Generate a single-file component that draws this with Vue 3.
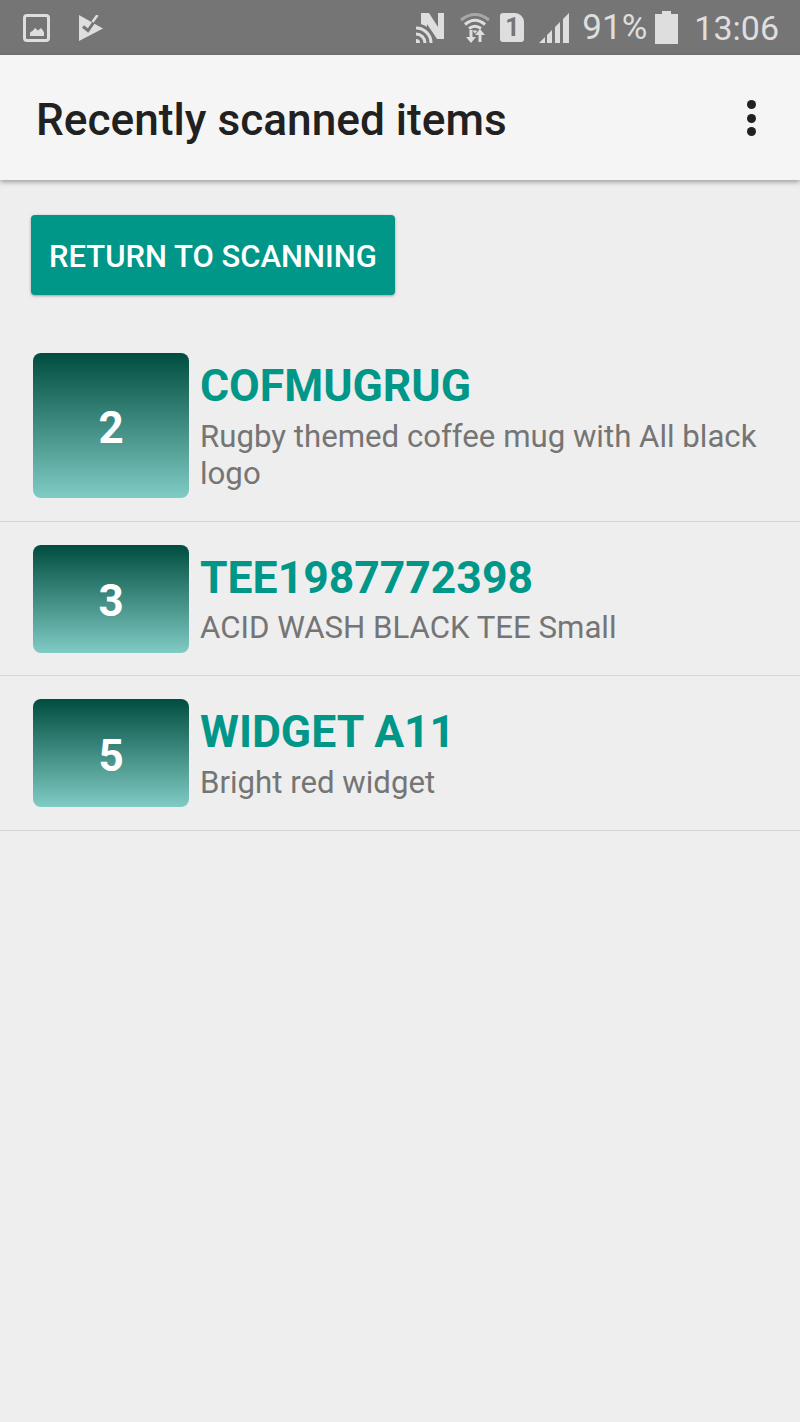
<script setup>
const items = [
  { qty: 2, sku: "COFMUGRUG", desc: "Rugby themed coffee mug with All black logo" },
  { qty: 3, sku: "TEE1987772398", desc: "ACID WASH BLACK TEE Small" },
  { qty: 5, sku: "WIDGET A11", desc: "Bright red widget" },
];
</script>

<template>
  <div class="screen">
    <div class="status-bar">
      <div class="status-left">
        <svg width="27" height="28" viewBox="0 0 27 28">
          <rect x="1.5" y="1.5" width="24" height="25" rx="2.5" fill="none" stroke="#dedede" stroke-width="3" />
          <path d="M7 22v-3.500l3-2 2-2.500 3 2.500 3-2.500 2 2.500 1 2v3.500z" fill="#dedede" />
        </svg>
        <svg class="ic-flag" width="24" height="26" viewBox="0 0 24 26">
          <path d="M0 0l24 13.500L0 26z" fill="#dedede" />
          <path d="M4 11.500l5 4L17 4" fill="none" stroke="#757575" stroke-width="3" />
          <path d="M14.500 4l3-4" fill="none" stroke="#757575" stroke-width="6" />
          <path d="M13.500 7l5-7" fill="none" stroke="#dedede" stroke-width="2.500" />
        </svg>
      </div>
      <div class="status-right">
        <svg width="30" height="32" viewBox="0 0 30 32">
          <path d="M6 1h8l9 14V1h6v26h-7L12 12v4H6z" fill="#dedede" />
          <path d="M1 13a18 18 0 0 1 18 18" fill="none" stroke="#757575" stroke-width="3" />
          <path d="M1 16a15 15 0 0 1 15 15M1 22a9 9 0 0 1 9 9" fill="none" stroke="#dedede" stroke-width="3" />
          <path d="M1 27a4 4 0 0 1 4 4H1z" fill="#dedede" />
        </svg>
        <svg class="ic-wifi" width="30" height="32" viewBox="0 0 30 32">
          <path d="M1 8Q15-3 29 8" fill="none" stroke="#a8a8a8" stroke-width="3" />
          <path d="M5 12.500Q15 4 25 12.500M9 16.500Q15 12 21 16.500" fill="none" stroke="#dedede" stroke-width="3" />
          <path d="M12.500 18.500h5L15 21.500z" fill="#dedede" />
          <path d="M9.500 18h3v7H16l-5 6-5-6h3.500zM18.500 30v-7H15l5-6 5 6h-3.500v7z" fill="#dedede" />
        </svg>
        <div class="sim">1</div>
        <svg class="ic-signal" width="30" height="30" viewBox="0 0 30 30">
          <path d="M0 30l6-6v6zM8 30v-8l5-5v13zM16 30V14l5-5v21zM24 30V6l6-6v30z" fill="#dedede" />
        </svg>
        <span class="battery-text">91%</span>
        <svg class="ic-battery" width="23" height="33" viewBox="0 0 23 33">
          <path d="M7 0h9v3h7v30H0V3h7z" fill="#dedede" />
        </svg>
        <span class="time">13:06</span>
      </div>
    </div>

    <div class="app-bar">
      <span class="app-title">Recently scanned items</span>
      <div class="menu">
        <span class="dot"></span>
        <span class="dot"></span>
        <span class="dot"></span>
      </div>
    </div>

    <div class="content">
      <button class="scan-btn">RETURN TO SCANNING</button>
      <div class="list">
        <div v-for="item in items" :key="item.sku" class="row">
          <div class="qty">{{ item.qty }}</div>
          <div class="info">
            <div class="sku">{{ item.sku }}</div>
            <div class="desc">{{ item.desc }}</div>
          </div>
        </div>
      </div>
    </div>
  </div>
</template>

<style>
html,
body {
  margin: 0;
  background: #eeeeee;
}
</style>

<style scoped>
.screen {
  width: 800px;
  height: 1422px;
  overflow: hidden;
  background: #eeeeee;
  font-family: Roboto, "Noto Sans", sans-serif;
}

.status-bar {
  height: 55px;
  background: #757575;
  display: flex;
  justify-content: space-between;
  align-items: center;
  color: #dedede;
  box-sizing: border-box;
  padding: 0 21px 0 23px;
}

.status-left {
  display: flex;
  align-items: center;
}

.ic-flag {
  margin-left: 29px;
}

.status-right {
  display: flex;
  align-items: center;
}

.ic-wifi {
  margin-left: 15px;
}

.sim {
  width: 24px;
  height: 29px;
  margin-left: 10px;
  background: #dedede;
  color: #757575;
  border-radius: 3px 9px 3px 3px;
  font-size: 25px;
  font-weight: 700;
  line-height: 30px;
  text-align: center;
}

.ic-signal {
  margin-left: 15px;
}

.battery-text {
  margin-left: 13px;
  font-size: 35px;
}

.ic-battery {
  margin-left: 8px;
}

.time {
  margin-left: 16px;
  font-size: 34px;
}

.app-bar {
  height: 125px;
  box-sizing: border-box;
  padding: 4px 44px 0 36px;
  background: #f5f5f5;
  box-shadow: 0 2px 5px rgba(0, 0, 0, 0.35);
  position: relative;
  display: flex;
  justify-content: space-between;
  align-items: center;
}

.app-title {
  font-size: 44.2px;
  font-weight: 500;
  color: #212121;
}

.menu {
  display: flex;
  flex-direction: column;
  gap: 4.5px;
  margin-top: -3px;
}

.dot {
  width: 9px;
  height: 9px;
  border-radius: 50%;
  background: #212121;
}

.content {
  padding-top: 35px;
}

.scan-btn {
  display: block;
  width: 364px;
  height: 80px;
  margin-left: 31px;
  padding: 3px 0 0;
  border: none;
  border-radius: 4px;
  background: #009688;
  color: #ffffff;
  font-family: inherit;
  font-size: 31px;
  font-weight: 500;
  box-shadow: 0 1px 3px rgba(0, 0, 0, 0.35);
}

.list {
  margin-top: 35px;
}

.row {
  display: flex;
  gap: 11px;
  padding: 23px 0 22.5px 33px;
  border-bottom: 1px solid #d6d6d6;
}

.qty {
  flex: none;
  width: 156px;
  box-sizing: border-box;
  padding-top: 5px;
  display: flex;
  align-items: center;
  justify-content: center;
  border-radius: 8px;
  background: linear-gradient(#004d40, #80cbc4);
  color: #ffffff;
  font-size: 44px;
  font-weight: 700;
}

.info {
  flex: 1;
  padding: 8px 30px 6.5px 0;
}

.sku {
  font-size: 44.5px;
  font-weight: 700;
  line-height: 50px;
  color: #009688;
}

.desc {
  font-size: 31.2px;
  line-height: 37px;
  color: #757575;
  margin-top: 6.5px;
}
</style>
